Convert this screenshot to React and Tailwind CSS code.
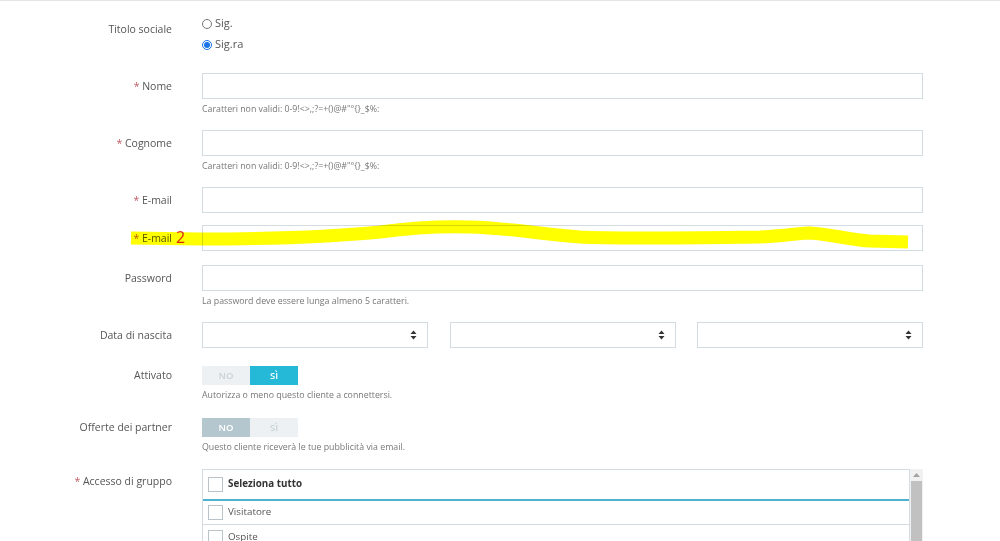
import React from 'react';

const Label = ({ children, required, pt = 'pt-[5px]' }) => (
  <div className={`w-[172px] shrink-0 text-right text-[10.5px] leading-[16px] text-[#555] ${pt}`}>
    {required && <span className="text-[#c05c67]">* </span>}
    {children}
  </div>
);

const Help = ({ children }) => (
  <div className="mt-[3px] h-[14px] text-[8.8px] leading-[14px] text-[#777]">{children}</div>
);

const Input = () => (
  <div className="h-[26px] w-[721px] border border-[#d3dce0] bg-white" />
);

const Caret = () => (
  <svg width="7" height="10" viewBox="0 0 7 10" className="text-[#333]">
    <path d="M3.5 0.5 L6.5 4 L0.5 4 Z M0.5 6 L6.5 6 L3.5 9.5 Z" fill="currentColor" />
  </svg>
);

const Select = () => (
  <div className="flex h-[26px] w-[226px] items-center justify-end border border-[#d3dce0] bg-white pr-[10px]">
    <Caret />
  </div>
);

const Toggle = ({ on }) => (
  <div className="flex h-[19px] w-[96px] text-[9.5px] font-semibold leading-[19px]">
    <div className={`flex-1 text-center ${on ? 'bg-[#eef1f3] text-[#c9d3d8]' : 'bg-[#b4c7cf] text-white'}`}>NO</div>
    <div className={`flex-1 text-center ${on ? 'bg-[#25b9d7] text-white' : 'bg-[#eef1f3] text-[#c9d3d8]'}`}>SÌ</div>
  </div>
);

const Box = () => (
  <span className="inline-block h-[15px] w-[15px] shrink-0 border border-[#b8c4c9] bg-white" />
);

const invalid = 'Caratteri non validi: 0-9!<>,;?=+()@#"°{}_$%:';

export default function App() {
  return (
    <div
      className="relative h-[541px] w-[1000px] overflow-hidden border-t border-[#e6e6e6] bg-white"
      style={{ fontFamily: '"Open Sans", "Noto Sans", sans-serif' }}
    >
      <div className="flex flex-col">
        {/* Titolo sociale */}
        <div className="mt-[12px] flex gap-[30px]">
          <Label pt="pt-[8px]">Titolo sociale</Label>
          <div className="flex flex-col text-[11px] text-[#555]">
            <label className="flex h-[21px] items-center gap-[3px]">
              <span className="inline-block h-[10px] w-[10px] rounded-full border border-[#777] bg-white" />
              Sig.
            </label>
            <label className="flex h-[21px] items-center gap-[3px]">
              <span className="flex h-[10px] w-[10px] items-center justify-center rounded-full border border-[#1a73e8] bg-white">
                <span className="h-[6px] w-[6px] rounded-full bg-[#1a73e8]" />
              </span>
              Sig.ra
            </label>
          </div>
        </div>

        {/* Nome */}
        <div className="mt-[18px] flex gap-[30px]">
          <Label required>Nome</Label>
          <div>
            <Input />
            <Help>{invalid}</Help>
          </div>
        </div>

        {/* Cognome */}
        <div className="mt-[14px] flex gap-[30px]">
          <Label required>Cognome</Label>
          <div>
            <Input />
            <Help>{invalid}</Help>
          </div>
        </div>

        {/* E-mail */}
        <div className="mt-[14px] flex gap-[30px]">
          <Label required>E-mail</Label>
          <Input />
        </div>

        {/* E-mail 2 */}
        <div className="relative mt-[12px] flex gap-[30px]">
          <Label required>E-mail</Label>
          <span className="absolute left-[176px] top-[2px] text-[16px] leading-[20px] text-[#d9281c]">2</span>
          <Input />
        </div>

        {/* Password */}
        <div className="mt-[14px] flex gap-[30px]">
          <Label>Password</Label>
          <div>
            <Input />
            <Help>La password deve essere lunga almeno 5 caratteri.</Help>
          </div>
        </div>

        {/* Data di nascita */}
        <div className="mt-[14px] flex gap-[30px]">
          <Label>Data di nascita</Label>
          <div className="flex w-[721px] justify-between">
            <Select />
            <Select />
            <Select />
          </div>
        </div>

        {/* Attivato */}
        <div className="mt-[18px] flex gap-[30px]">
          <Label pt="pt-[1px]">Attivato</Label>
          <div>
            <Toggle on />
            <Help>Autorizza o meno questo cliente a connettersi.</Help>
          </div>
        </div>

        {/* Offerte */}
        <div className="mt-[16px] flex gap-[30px]">
          <Label pt="pt-[1px]">Offerte dei partner</Label>
          <div>
            <Toggle />
            <Help>Questo cliente riceverà le tue pubblicità via email.</Help>
          </div>
        </div>

        {/* Accesso di gruppo */}
        <div className="mt-[15px] flex gap-[30px]">
          <Label required pt="pt-[4px]">Accesso di gruppo</Label>
          <div className="flex w-[721px]">
            <div className="flex w-[708px] flex-col border border-b-0 border-[#d3dce0] text-[9.8px] text-[#555]">
              <div className="flex h-[31px] items-center gap-[5px] border-b-2 border-[#4fb3cf] pl-[5px] font-bold text-[#333]">
                <Box />
                Seleziona tutto
              </div>
              <div className="flex h-[24px] items-center gap-[5px] border-b border-[#d3dce0] pl-[5px]">
                <Box />
                Visitatore
              </div>
              <div className="flex h-[24px] items-center gap-[5px] pl-[5px]">
                <Box />
                Ospite
              </div>
            </div>
            <div className="flex w-[13px] flex-col bg-[#f1f1f1]">
              <div className="flex h-[12px] items-center justify-center">
                <svg width="7" height="4" viewBox="0 0 7 4">
                  <path d="M3.5 0 L7 4 L0 4 Z" fill="#a3a3a3" />
                </svg>
              </div>
              <div className="mx-[1px] flex-1 bg-[#c1c1c1]" />
            </div>
          </div>
        </div>
      </div>

      {/* highlighter annotation */}
      <svg className="pointer-events-none absolute left-0 top-0 mix-blend-multiply" width="1000" height="541">
        <path
          d="M131 237 L200 238 C270 238 330 236 380 231 C410 227 440 225 470 226 C510 227 540 233 580 236 C620 238 680 237 760 236 C785 235 800 232 810 232 C830 233 850 239 870 240 L908 241"
          fill="none"
          stroke="#ffff00"
          strokeWidth="13"
          strokeLinejoin="round"
        />
      </svg>
    </div>
  );
}
